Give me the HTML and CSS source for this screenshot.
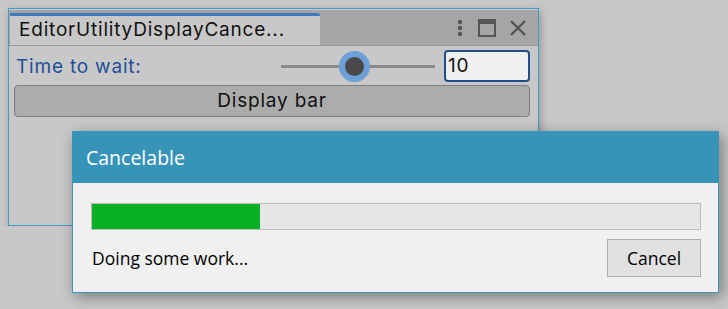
FILE: index.html
```html
<!DOCTYPE html>
<html>
<head>
<title>EditorUtilityDisplayCancelableProgressBar</title>
<meta http-equiv="Content-Type" content="text/html; charset=UTF-8" />
<link rel="stylesheet" href="styles.css">
</head>
<body>

<div class="editor">
  <div class="tabbar">
    <div class="tab">EditorUtilityDisplayCance...</div>
    <div class="tools">
      <svg width="10" height="18" viewBox="0 0 10 18"><circle cx="5" cy="3" r="2.2" fill="#555"/><circle cx="5" cy="9" r="2.2" fill="#555"/><circle cx="5" cy="15" r="2.2" fill="#555"/></svg>
      <svg width="18" height="18" viewBox="0 0 18 18"><rect x="1" y="1" width="16" height="16" fill="none" stroke="#555" stroke-width="2"/><rect x="1" y="1" width="16" height="4" fill="#555"/></svg>
      <svg width="18" height="18" viewBox="0 0 18 18"><path d="M2 2 L16 16 M16 2 L2 16" stroke="#555" stroke-width="2.4"/></svg>
    </div>
  </div>
  <div class="content">
    <div class="row">
      <span class="label">Time to wait:</span>
      <div class="slider">
        <div class="track"></div>
        <div class="thumb"></div>
      </div>
      <div class="field">10</div>
    </div>
    <div class="btn">Display bar</div>
  </div>
</div>

<div class="dialog">
  <div class="dlg-title">Cancelable</div>
  <div class="dlg-body">
    <div class="progress"><div class="fill" style="width:168px"></div></div>
    <div class="dlg-row">
      <span class="status">Doing some work...</span>
      <div class="cancel">Cancel</div>
    </div>
  </div>
</div>

</body>
</html>
```

FILE: styles.css
```css
body{background:#c8c8c8; margin:0; font-family:"Open Sans","Noto Sans",sans-serif;}

.editor {
  margin:8px 0 0 8px;
  width:529px;
  height:216px;
  border:1px solid #3e9cc5;
  background:#c8c8c8;
  box-shadow:2px 3px 8px rgba(0,0,0,0.25);
  font-family:Inter,"Open Sans",sans-serif;
  letter-spacing:0.8px;
}

.tabbar {
  height:35px;
  margin-top:1px;
  background:#a5a5a5;
  border-bottom:1px solid #9a9a9a;
  display:flex;
  align-items:flex-end;
}

.tab {
  margin-left:1px;
  width:301px;
  height:29px;
  background:#c8c8c8;
  border-top:3px solid #3f78bd;
  border-top-right-radius:3px;
  font-size:19px;
  line-height:28px;
  padding-left:9px;
  color:#111;
  white-space:nowrap;
}

.tools {
  margin-left:auto;
  align-self:center;
  display:flex;
  gap:13px;
  align-items:center;
  padding-right:11px;
}
.tools svg{display:block;}

.content {
  padding:4px 8px 0 5px;
}

.row {
  display:flex;
  align-items:center;
  height:32px;
}

.label {
  flex:1;
  padding-left:2px;
  color:#1f4f9a;
  font-size:19px;
}

.slider {
  position:relative;
  width:154px;
  height:32px;
  margin-right:9px;
}
.track {
  position:absolute;
  left:0; right:0;
  top:15px;
  height:3px;
  background:#8a8a8a;
}
.thumb {
  position:absolute;
  left:58px;
  top:1px;
  width:19px;
  height:19px;
  border-radius:50%;
  background:#494949;
  border:6px solid #6d9fd8;
}

.field {
  width:80px;
  height:28px;
  border:2px solid #1e4f8c;
  border-radius:4px;
  background:#f0f0f0;
  font-size:19px;
  line-height:28px;
  padding-left:2px;
  color:#111;
}

.btn {
  margin-top:3px;
  height:30px;
  border:1px solid #7e7e7e;
  border-radius:4px;
  background:#acacac;
  text-align:center;
  font-size:19px;
  line-height:30px;
  color:#111;
}

/* native win32 dialog on top */
.dialog {
  position:absolute;
  left:72px;
  top:131px;
  width:645px;
  height:160px;
  border:1px solid #3a96bf;
  background:#f0f0f0;
  box-shadow:3px 4px 14px rgba(0,0,0,0.4);
}

.dlg-title {
  height:51px;
  background:#3793b8;
  color:#fff;
  font-size:19.5px;
  line-height:52px;
  padding-left:13px;
}

.dlg-body {
  padding:20px 17px 0 18px;
}

.progress {
  height:25px;
  border:1px solid #bcbcbc;
  background:#e6e6e6;
}
.fill {
  height:100%;
  background:#06b025;
}

.dlg-row {
  display:flex;
  justify-content:space-between;
  align-items:center;
  margin-top:9px;
}

.status {
  font-size:17.5px;
  padding-left:1px;
  color:#000;
}

.cancel {
  width:92px;
  height:36px;
  border:1px solid #adadad;
  background:#e1e1e1;
  text-align:center;
  font-size:17.5px;
  line-height:36px;
  color:#000;
}
```
